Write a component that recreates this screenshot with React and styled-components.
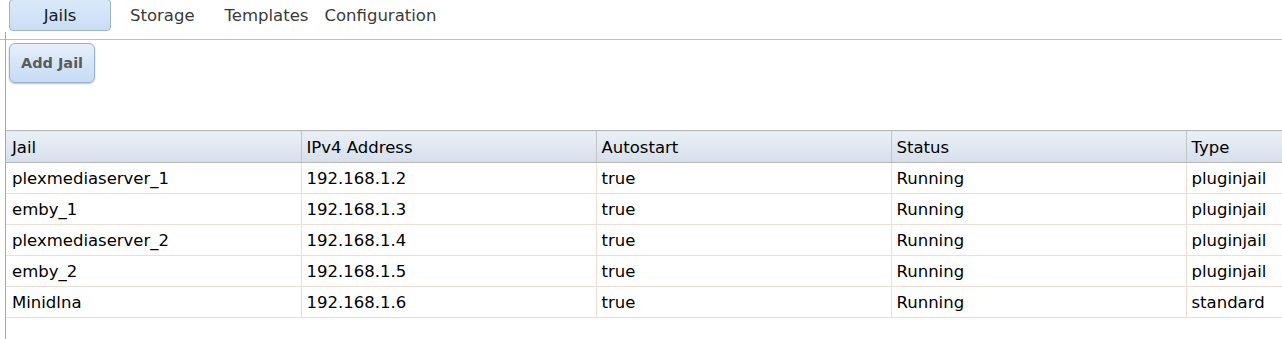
import React, { useState } from "react";
import styled, { createGlobalStyle } from "styled-components";

const GlobalStyle = createGlobalStyle`
  html, body {
    margin: 0;
    padding: 0;
    background: #fff;
    overflow: hidden;
  }
  body {
    font-family: "DejaVu Sans", Verdana, sans-serif;
    font-size: 16.5px;
  }
`;

const Page = styled.div`
  width: 1282px;
  height: 339px;
`;

const TabBar = styled.div`
  position: relative;
  display: flex;
  align-items: flex-start;
  height: 39px;
  padding-left: 9px;
  border-bottom: 1px solid #bcbcc8;

  &::before {
    content: "";
    position: absolute;
    left: 5px;
    top: 32px;
    bottom: -1px;
    width: 1px;
    background: #a8a8a8;
  }
`;

const Tab = styled.button`
  font-family: inherit;
  font-size: 16.5px;
  height: 32px;
  margin: -1px 0 0 ${(p) => p.$gap || 0}px;
  padding: 0;
  width: ${(p) => (p.$active ? "102px" : "auto")};
  border-radius: 4px;
  cursor: pointer;
  color: ${(p) => (p.$active ? "#1a1a1a" : "#3a3a3a")};
  border: 1px solid ${(p) => (p.$active ? "#9fb3c8" : "transparent")};
  background: ${(p) =>
    p.$active ? "linear-gradient(#d9e9fa, #c9def5)" : "transparent"};
`;

const Pane = styled.div`
  margin-left: 5px;
  border-left: 1px solid #a8a8a8;
  height: 299px;
`;

const AddButton = styled.button`
  margin: 3px 0 0 3px;
  width: 86px;
  height: 40px;
  font-family: inherit;
  font-size: 14.5px;
  font-weight: bold;
  color: #5b5b5b;
  border: 1px solid #9ab0c8;
  border-radius: 6px;
  background: linear-gradient(#e6f0fb, #c5dbf4);
  box-shadow: 0 1px 2px rgba(0, 0, 0, 0.25);
  cursor: pointer;
`;

const Table = styled.table`
  margin-top: 47px;
  width: 100%;
  border-collapse: collapse;
  table-layout: fixed;
`;

const Th = styled.th`
  box-sizing: border-box;
  width: ${(p) => p.$w || "auto"};
  height: 32px;
  padding: 1px 0 0 ${(p) => (p.$first ? 6 : 5)}px;
  text-align: left;
  font-weight: normal;
  color: #000;
  background: linear-gradient(#ebf0f6, #d5dfeb);
  border-top: 1px solid #b8b8b8;
  border-bottom: 1px solid #b8b8b8;
  border-left: 1px solid #c4c4c4;

  &:first-child {
    border-left: none;
  }
`;

const Td = styled.td`
  height: 28px;
  padding: 2px 0 0 5px;
  line-height: 20px;
  color: #000;
  white-space: nowrap;
  overflow: hidden;
  border-bottom: 1px solid #eddfd3;
  border-left: 1px solid #eddfd3;

  &:first-child {
    padding-left: 6px;
    border-left: none;
  }
`;

const tabs = [
  { label: "Jails", gap: 0 },
  { label: "Storage", gap: 18 },
  { label: "Templates", gap: 28 },
  { label: "Configuration", gap: 14 },
];

const columns = ["Jail", "IPv4 Address", "Autostart", "Status", "Type"];

const jails = [
  ["plexmediaserver_1", "192.168.1.2", "true", "Running", "pluginjail"],
  ["emby_1", "192.168.1.3", "true", "Running", "pluginjail"],
  ["plexmediaserver_2", "192.168.1.4", "true", "Running", "pluginjail"],
  ["emby_2", "192.168.1.5", "true", "Running", "pluginjail"],
  ["Minidlna", "192.168.1.6", "true", "Running", "standard"],
];

const App = () => {
  const [active, setActive] = useState("Jails");
  return (
    <Page>
      <GlobalStyle />
      <TabBar>
        {tabs.map((t) => (
          <Tab
            key={t.label}
            $active={active === t.label}
            $gap={t.gap}
            onClick={() => setActive(t.label)}
          >
            {t.label}
          </Tab>
        ))}
      </TabBar>
      <Pane>
        <AddButton>Add Jail</AddButton>
        <Table>
          <thead>
            <tr>
              {columns.map((c, i) => (
                <Th key={c} $first={i === 0} $w={i < 4 ? "295px" : "auto"}>
                  {c}
                </Th>
              ))}
            </tr>
          </thead>
          <tbody>
            {jails.map((row) => (
              <tr key={row[0]}>
                {row.map((cell, i) => (
                  <Td key={i}>{cell}</Td>
                ))}
              </tr>
            ))}
          </tbody>
        </Table>
      </Pane>
    </Page>
  );
};

export default App;
